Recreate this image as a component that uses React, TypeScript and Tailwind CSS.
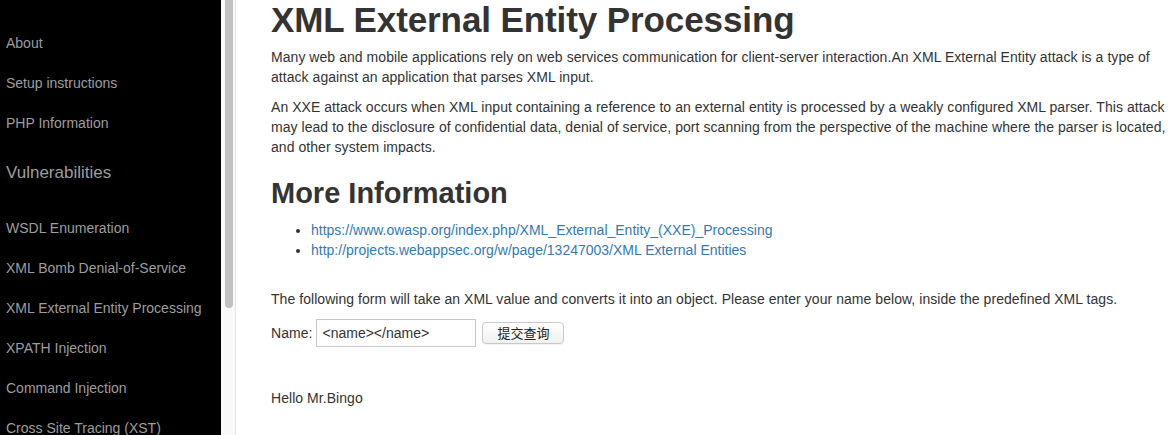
import React from "react";

const side = [
  "About",
  "Setup instructions",
  "PHP Information",
];
const vulns = [
  "WSDL Enumeration",
  "XML Bomb Denial-of-Service",
  "XML External Entity Processing",
  "XPATH Injection",
  "Command Injection",
  "Cross Site Tracing (XST)",
];

export default function App() {
  return (
    <div
      className="flex h-[435px] w-[1171px] overflow-hidden bg-white text-[#333]"
      style={{ fontFamily: '"Liberation Sans", Arial, sans-serif' }}
    >
      <aside className="h-full w-[221px] shrink-0 bg-black pl-[6px] pt-[23px] text-[14px] text-[#9d9d9d]">
        {side.map((s) => (
          <div key={s} className="h-[40px] leading-[40px]">
            {s}
          </div>
        ))}
        <div className="mt-[20px] h-[20px] text-[17px] leading-[20px]">Vulnerabilities</div>
        <div className="pt-[25px]">
          {vulns.map((s) => (
            <div key={s} className="h-[40px] leading-[40px] whitespace-nowrap">
              {s}
            </div>
          ))}
        </div>
      </aside>
      <div className="flex h-full w-[15px] shrink-0 border-r border-[#e6e6e6] bg-[#f9f9f9] pl-[4px]">
        <div className="h-[308px] w-[8px] rounded-b-[4px] bg-[#c1c1c1]" />
      </div>
      <main className="min-w-0 flex-1 pl-[35px] text-[14px] leading-[20px] tracking-[0.05px]">
        <h1 className="mb-[7px] h-[40px] text-[35px] font-bold leading-[40px] tracking-[-0.1px] whitespace-nowrap">
          XML External Entity Processing
        </h1>
        <p className="mb-[10px]">
          Many web and mobile applications rely on web services communication for client-server
          interaction.An XML External Entity attack is a type of attack against an application that
          parses XML input.
        </p>
        <p>
          An XXE attack occurs when XML input containing a reference to an external entity is
          processed by a weakly configured XML parser. This attack may lead to the disclosure of
          confidential data, denial of service, port scanning from the perspective of the machine
          where the parser is located, and other system impacts.
        </p>
        <h2 className="mt-[20px] mb-[10px] h-[33px] text-[29px] font-bold leading-[33px] tracking-normal">
          More Information
        </h2>
        <ul className="list-disc pl-[40px] tracking-normal">
          <li>
            <a href="#" className="text-[#337ab7]">
              https://www.owasp.org/index.php/XML_External_Entity_(XXE)_Processing
            </a>
          </li>
          <li>
            <a href="#" className="text-[#337ab7]">
              http://projects.webappsec.org/w/page/13247003/XML External Entities
            </a>
          </li>
        </ul>
        <p className="mt-[29px] mb-[10px]">
          The following form will take an XML value and converts it into an object. Please enter
          your name below, inside the predefined XML tags.
        </p>
        <div className="flex h-[28px] items-center">
          <span>Name:</span>
          <div className="ml-[4px] flex h-[28px] w-[160px] items-center border border-[#c8c8c8] pl-[5px] text-[14px] tracking-normal">
            &lt;name&gt;&lt;/name&gt;
          </div>
          <button
            className="ml-[6px] flex h-[22px] w-[82px] items-center justify-center rounded-[4px] border border-[#c8c8c8] bg-gradient-to-b from-white to-[#f1f1f1] text-[13px] text-[#222] shadow-[0_1px_1px_rgba(0,0,0,0.06)]"
            style={{ fontFamily: '"Noto Sans CJK SC", "Liberation Sans", sans-serif' }}
          >
            提交查询
          </button>
        </div>
        <p className="mt-[41px]">Hello Mr.Bingo</p>
      </main>
    </div>
  );
}
